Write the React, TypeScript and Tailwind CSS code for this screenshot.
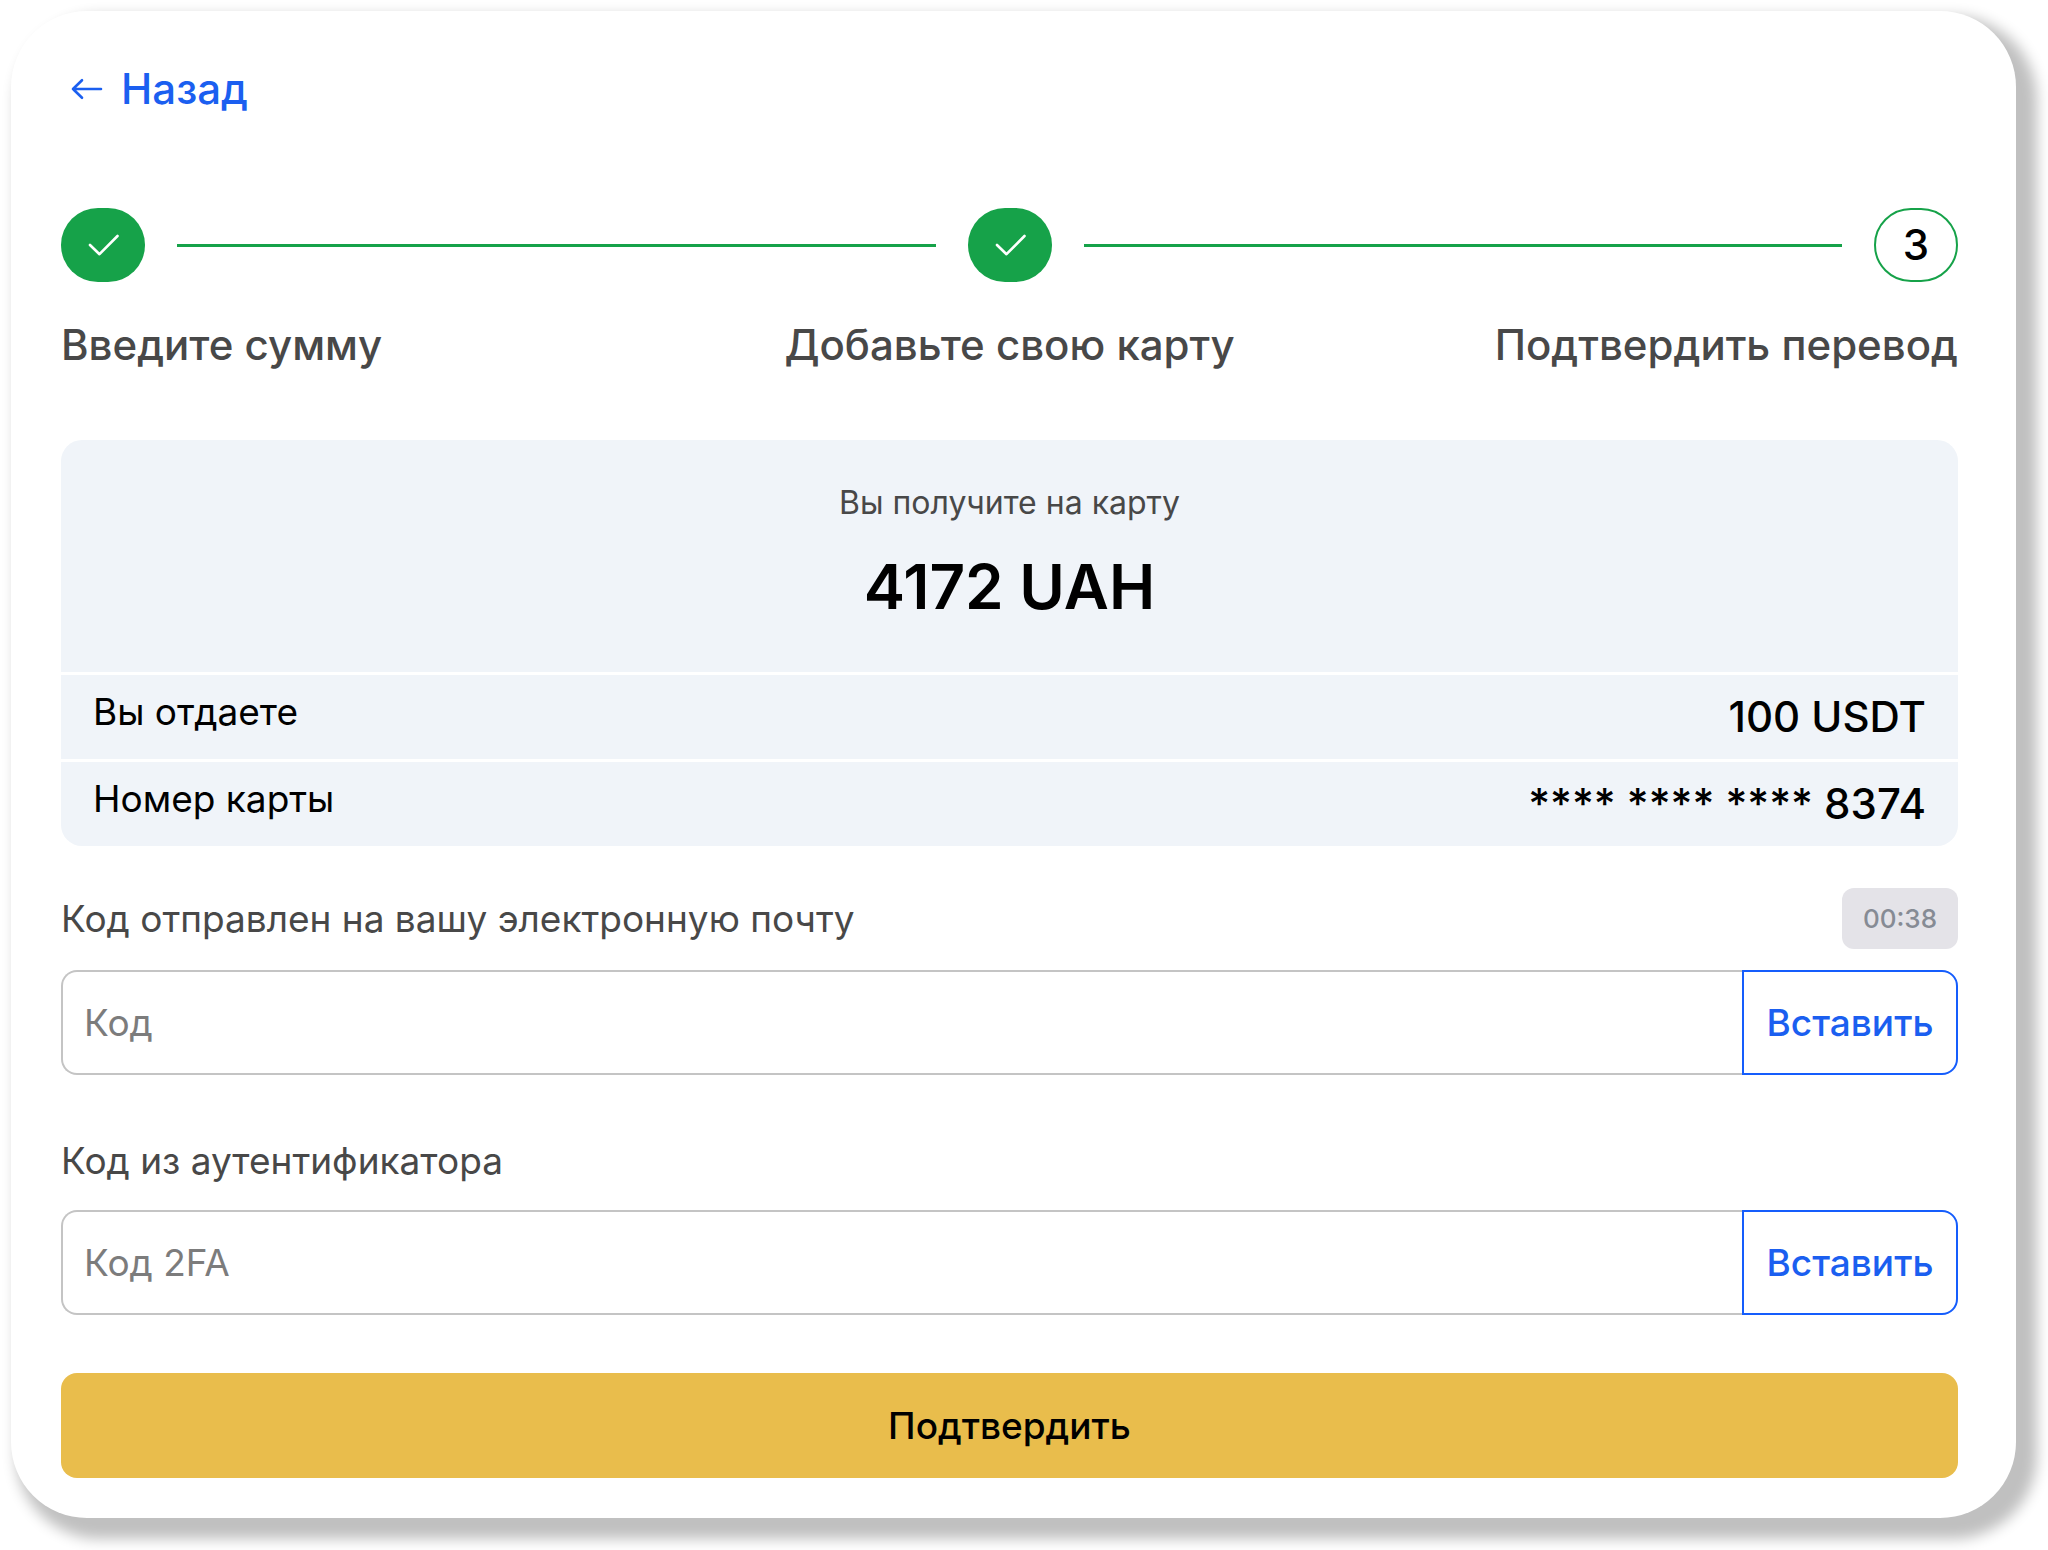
import { useState } from "react";

const steps = [
  { label: "Введите сумму", done: true, align: "text-left" },
  { label: "Добавьте свою карту", done: true, align: "text-center" },
  { label: "Подтвердить перевод", done: false, align: "text-right" },
];

function ArrowLeft() {
  return (
    <svg className="h-6 w-8" viewBox="0 0 32 24" fill="none" stroke="currentColor" strokeWidth="2.6" strokeLinecap="round" strokeLinejoin="round" aria-hidden="true">
      <path d="M30 12H2M11 3.2L2 12l9 8.8" />
    </svg>
  );
}

function Check() {
  return (
    <svg className="h-6 w-8" viewBox="0 0 32 24" fill="none" stroke="currentColor" strokeWidth="2.6" strokeLinecap="round" strokeLinejoin="round" aria-hidden="true">
      <path d="M3 12l9.5 9.2L30.5 3" />
    </svg>
  );
}

function StepMark({ index, done }: { index: number; done: boolean }) {
  return done ? (
    <span className="flex h-[74px] w-[84px] shrink-0 items-center justify-center rounded-full bg-[#16a249] text-white">
      <Check />
    </span>
  ) : (
    <span className="flex h-[74px] w-[84px] shrink-0 items-center justify-center rounded-full border-2 border-[#16a249] text-[42px] leading-[64px] font-medium text-black">
      {index + 1}
    </span>
  );
}

function CodeInput({ id, placeholder }: { id: string; placeholder: string }) {
  const [value, setValue] = useState("");
  const paste = async () => {
    setValue(await navigator.clipboard.readText());
  };
  return (
    <div className="flex h-[105px]">
      <input
        id={id}
        type="text"
        value={value}
        placeholder={placeholder}
        onChange={(e) => setValue(e.target.value)}
        className="min-w-0 flex-1 rounded-l-2xl border-2 border-r-0 border-[#c4c4c4] bg-white px-[21px] text-[37px] text-black outline-none placeholder:text-[#7c7c7c]"
      />
      <button
        type="button"
        onClick={paste}
        className="w-[216px] shrink-0 rounded-r-2xl border-2 border-[#155dfc] text-[37px] font-medium text-[#1b5ff0]"
      >
        Вставить
      </button>
    </div>
  );
}

export default function App() {
  return (
    <main className="min-h-screen bg-white pt-[11px] pr-8 pb-8 pl-[11px] font-['Inter',sans-serif]">
      <section className="rounded-[76px] bg-white pt-[46px] pr-[58px] pb-10 pl-[50px] shadow-[13px_13px_14px_8px_#c0c0c0]">
        <a href="#back" className="ml-2.5 inline-flex h-16 items-center gap-[18px] align-top text-[42px] leading-[64px] font-medium text-[#1b5ff0]">
          <ArrowLeft />
          Назад
        </a>

        <div className="mt-[87px] flex items-center gap-8">
          <StepMark index={0} done={steps[0].done} />
          <span className="h-[3px] flex-1 bg-[#16a249]" />
          <StepMark index={1} done={steps[1].done} />
          <span className="h-[3px] flex-1 bg-[#16a249]" />
          <StepMark index={2} done={steps[2].done} />
        </div>
        <ol className="mt-[31px] grid grid-cols-3 text-[42px] leading-[64px] font-medium text-[#484848]">
          {steps.map((step) => (
            <li key={step.label} className={step.align}>
              {step.label}
            </li>
          ))}
        </ol>

        <div className="mt-[63px] overflow-hidden rounded-[21px] bg-[#f0f4f9] text-black">
          <div className="flex flex-col items-center gap-5 pt-[39px] pb-[45px]">
            <p className="text-[32px] leading-[48px] text-[#484848]">Вы получите на карту</p>
            <p className="text-[62px] leading-[80px] font-semibold">4172 UAH</p>
          </div>
          <dl>
            <div className="flex justify-between border-t-[3px] border-white px-8 py-2.5">
              <dt className="text-[37px] leading-[54px]">Вы отдаете</dt>
              <dd className="text-[42px] leading-[64px] font-medium">100 USDT</dd>
            </div>
            <div className="flex justify-between border-t-[3px] border-white px-8 py-2.5">
              <dt className="text-[37px] leading-[54px]">Номер карты</dt>
              <dd className="text-[42px] leading-[64px] font-medium">**** **** **** 8374</dd>
            </div>
          </dl>
        </div>

        <form onSubmit={(e) => e.preventDefault()}>
          <div className="mt-[42px] mb-[21px] flex items-center justify-between">
            <label htmlFor="email-code" className="text-[37px] leading-[56px] text-[#484848]">
              Код отправлен на вашу электронную почту
            </label>
            <button type="button" disabled className="h-[61px] rounded-xl bg-[#e4e3e8] px-[21px] text-[26px] font-medium text-[#868b94]">
              00:38
            </button>
          </div>
          <CodeInput id="email-code" placeholder="Код" />
          <label htmlFor="auth-code" className="mt-[58px] mb-[21px] block text-[37px] leading-[56px] text-[#484848]">
            Код из аутентификатора
          </label>
          <CodeInput id="auth-code" placeholder="Код 2FA" />
          <button type="submit" className="mt-[58px] h-[105px] w-full rounded-2xl bg-[#e9bd4c] text-[37px] font-medium text-black">
            Подтвердить
          </button>
        </form>
      </section>
    </main>
  );
}
